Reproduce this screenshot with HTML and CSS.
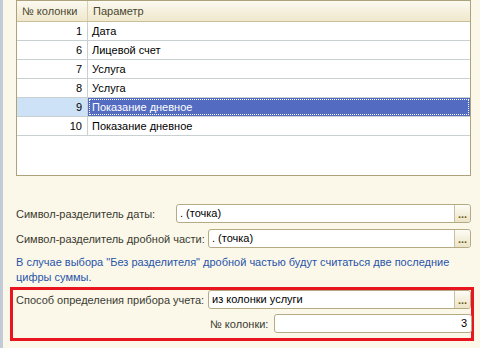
FILE: index.html
```html
<!DOCTYPE html>
<html lang="ru">
<head>
  <meta charset="UTF-8" />
  <title>Настройка загрузки</title>
  <link rel="stylesheet" href="styles.css">
</head>
<body>
  <div class="page">
    <div class="grid">
      <div class="grid-head">
        <div class="c-num">№ колонки</div>
        <div class="c-par">Параметр</div>
      </div>
      <div class="grid-row"><div class="c-num">1</div><div class="c-par">Дата</div></div>
      <div class="grid-row"><div class="c-num">6</div><div class="c-par">Лицевой счет</div></div>
      <div class="grid-row"><div class="c-num">7</div><div class="c-par">Услуга</div></div>
      <div class="grid-row"><div class="c-num">8</div><div class="c-par">Услуга</div></div>
      <div class="grid-row selected"><div class="c-num">9</div><div class="c-par">Показание дневное</div></div>
      <div class="grid-row"><div class="c-num">10</div><div class="c-par">Показание дневное</div></div>
    </div>

    <div class="field">
      <label class="w-short">Символ-разделитель даты:</label>
      <div class="input"><span>. (точка)</span><button>...</button></div>
    </div>
    <div class="field">
      <label class="w-long">Символ-разделитель дробной части:</label>
      <div class="input"><span>. (точка)</span><button>...</button></div>
    </div>
    <p class="note">В случае выбора "Без разделителя" дробной частью будут считаться две последние цифры суммы.</p>

    <div class="marked">
      <div class="field">
        <label class="w-long">Способ определения прибора учета:</label>
        <div class="input"><span>из колонки услуги</span><button>...</button></div>
      </div>
      <div class="field right">
        <label>№ колонки:</label>
        <div class="input num"><span>3</span></div>
      </div>
    </div>
  </div>
</body>
</html>
```

FILE: styles.css
```css
body {
  margin: 0;
  background-color: #fbf8ea;
  font-family: 'Liberation Sans', Arial, sans-serif;
  font-size: 11px;
  color: #3a3a30;
}

.page {
  border-left: 3px solid #c3cbd8;
  height: 348px;
  padding-left: 13px;
  padding-right: 9px;
  box-sizing: border-box;
}

.grid {
  border: 1px solid #aca37c;
  height: 176px;
  box-sizing: border-box;
  background: #fff;
}

.grid-head {
  display: flex;
  height: 20px;
  border-bottom: 1px solid #c9c09a;
  background: linear-gradient(#fbf9f1, #f0e8cc);
  color: #4a4630;
}

.grid-head div {
  line-height: 20px;
  padding-left: 5px;
}

.grid-head .c-num {
  border-right: 1px solid #d8d0b0;
}

.grid-row {
  display: flex;
  height: 18px;
  border-bottom: 1px solid #c8d0d2;
  color: #000;
}

.grid-row div {
  line-height: 19px;
}

.c-num {
  width: 71px;
  box-sizing: border-box;
  flex-shrink: 0;
}

.grid-row .c-num {
  text-align: right;
  padding-right: 5px;
  border-right: 1px solid #c8d0d2;
}

.c-par {
  flex: 1;
  padding-left: 4px;
}

.grid-row.selected .c-num {
  background: #cde1f7;
}

.grid-row.selected .c-par {
  background: #536cc2;
  color: #fff;
  outline: 1px dotted #fff;
  outline-offset: -2px;
}

.field {
  display: flex;
  align-items: center;
  height: 19px;
  margin-top: 6px;
}

.grid + .field {
  margin-top: 28px;
}

.field label {
  white-space: nowrap;
}

.w-short {
  width: 160px;
}

.w-long {
  width: 192px;
}

.input {
  flex: 1;
  display: flex;
  height: 19px;
  box-sizing: border-box;
  border: 1px solid #b4ab84;
  border-radius: 3px;
  background: #fff;
  color: #000;
}

.input span {
  flex: 1;
  line-height: 17px;
  padding-left: 3px;
}

.input button {
  width: 16px;
  padding: 0;
  border: none;
  border-left: 1px solid #c8c0a0;
  border-radius: 0 3px 3px 0;
  background: linear-gradient(#fdfcf6, #ece4c6);
  color: #6b5a10;
  font-family: inherit;
  font-size: 11px;
  font-weight: bold;
  line-height: 12px;
}

.note {
  margin: 7px 0 0;
  color: #2854a8;
  line-height: 15px;
}

.marked {
  margin: 2px 0 0 -6px;
  width: 464px;
  height: 54px;
  box-sizing: border-box;
  border: 3px solid #e8141e;
  padding: 0 0 0 3px;
}

.marked .field {
  margin-top: 0;
}

.marked .field.right {
  margin-top: 5px;
  padding-left: 194px;
  margin-right: -1px;
}

.marked .field.right label {
  margin-right: 6px;
}

.input.num span {
  text-align: right;
  padding-right: 4px;
}
```
